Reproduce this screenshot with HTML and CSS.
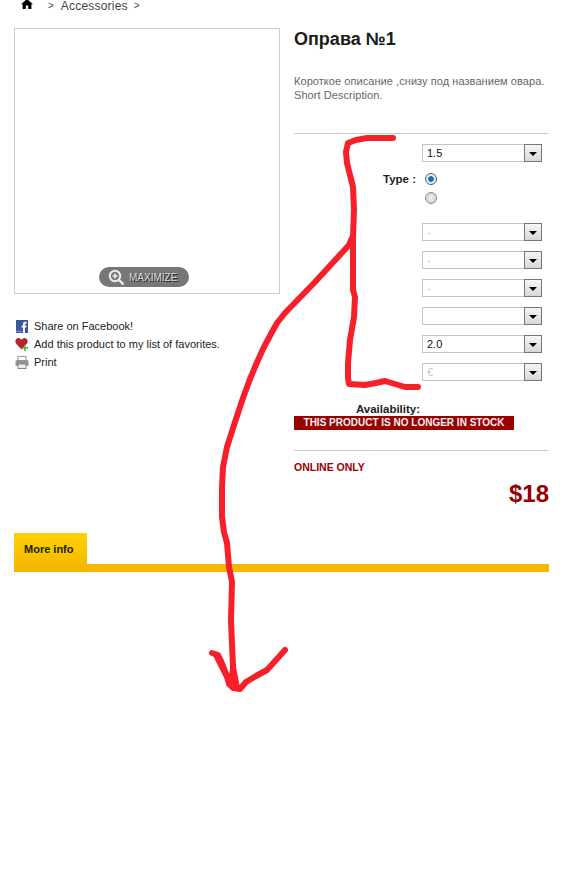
FILE: index.html
```html
<!DOCTYPE html>
<html lang="ru">
<head>
<meta charset="utf-8">
<title>Оправа №1</title>
<link rel="stylesheet" href="styles.css">
</head>
<body>
<nav class="crumbs">
  <svg class="home" width="12" height="10" viewBox="0 0 12 10"><path d="M6 0 L12 5.2 L10.4 5.2 L10.4 10 L7.2 10 L7.2 6.6 L4.8 6.6 L4.8 10 L1.6 10 L1.6 5.2 L0 5.2 Z" fill="#000"/></svg>
  <span class="sep">&gt;</span><span class="crumb">Accessories</span><span class="sep">&gt;</span>
</nav>
<main class="product">
  <section class="left">
    <div class="photo">
      <div class="maximize">
        <svg width="17" height="17" viewBox="0 0 17 17"><circle cx="7" cy="7" r="5.2" fill="#777" stroke="#eee" stroke-width="2"/><path d="M4.5 7h5M7 4.5v5" stroke="#eee" stroke-width="1.6"/><path d="M11 11l4.5 4.5" stroke="#eee" stroke-width="2.4"/></svg>
        <span>MAXIMIZE</span>
      </div>
    </div>
    <ul class="actions">
      <li>
        <svg width="12" height="13" viewBox="0 0 12 13"><rect width="12" height="13" fill="#3b5998"/><path d="M7 13V7.4H5.6V5.4H7V4c0-1.5.9-2.3 2.2-2.3h1.3v2H9.6c-.5 0-.7.2-.7.7v1h1.6l-.3 2H8.9V13z" fill="#fff"/><rect y="10.8" width="6" height="1" fill="#8b9dc3"/></svg>
        <span>Share on Facebook!</span>
      </li>
      <li>
        <svg width="14" height="14" viewBox="0 0 14 14"><path d="M6.5 12.5 L1 6.5 C-.5 4 1 1 3.5 1 C5 1 6 2 6.5 3 C7 2 8 1 9.5 1 C12 1 13.5 4 12 6.5 Z" fill="#b3262a"/><path d="M9 8h1.7v2H13v1.8h-2.3V14H9v-2.200H7V10h2z" fill="#5db548"/></svg>
        <span>Add this product to my list of favorites.</span>
      </li>
      <li>
        <svg width="14" height="13" viewBox="0 0 14 13"><rect x="3" y="0.500" width="8" height="4" fill="#fff" stroke="#999"/><rect x="0.500" y="4" width="13" height="6" rx="1.500" fill="#8f9498"/><rect x="3" y="8" width="8" height="4.500" fill="#eee" stroke="#888"/></svg>
        <span>Print</span>
      </li>
    </ul>
  </section>
  <section class="right">
    <h1 class="title">Оправа №1</h1>
    <p class="desc">Короткое описание ,снизу под названием овара.<br>Short Description.</p>
    <hr class="rule">
    <div class="options">
      <div class="select"><span class="val">1.5</span><span class="btn"><i></i></span></div>
      <div class="type">
        <span class="type-label">Type :</span>
        <div class="radios">
          <span class="radio on"></span>
          <span class="radio"></span>
        </div>
      </div>
      <div class="selects">
        <div class="select"><span class="val dim">-</span><span class="btn"><i></i></span></div>
        <div class="select"><span class="val dim">-</span><span class="btn"><i></i></span></div>
        <div class="select"><span class="val dim">-</span><span class="btn"><i></i></span></div>
        <div class="select"><span class="val dim"></span><span class="btn"><i></i></span></div>
        <div class="select"><span class="val">2.0</span><span class="btn"><i></i></span></div>
        <div class="select"><span class="val dim">€</span><span class="btn"><i></i></span></div>
      </div>
    </div>
    <div class="avail-label">Availability:</div>
    <div class="avail-bar">THIS PRODUCT IS NO LONGER IN STOCK</div>
    <hr class="rule second">
    <div class="online">ONLINE ONLY</div>
    <div class="price">$18</div>
  </section>
</main>
<div class="tabs">
  <div class="tab">More info</div>
</div>
<svg class="scribble" width="565" height="878" viewBox="0 0 565 878" fill="none" stroke="#f7202a" stroke-width="6" stroke-linecap="round" stroke-linejoin="round">
  <path d="M393 138 L367 138 L356 140 L348 143 L346 152 L347 163 L350 175 L353 187 L354 210 L353 237 L353 290 L355 297 L354 317 L350 340 L348 363 L348 378 L349 384 L365 385 L376 383 L385 381 L395 384 L405 387 L418 387"/>
  <path d="M352 238 L349 245 L338 257 L315 282 L285 313 L277 323 L272 332 L264 347 L258 360 L250 379 L243 398 L235 422 L227 447 L223 467 L222 488 L222 517 L224 532 L227 543 L229 567 L232 582 L231 620 L233 667 L237 688"/>
  <path d="M212 653 L218 655 L221 661 L227 676 L229 684 L233 688 L240 689 L246 682 L256 676 L267 670 L276 660 L285 650"/>
  <path d="M216 655 L224 671 L231 684 L233 668"/>
</svg>
</body>
</html>
```

FILE: styles.css
```css
html, body {
  margin: 0;
  padding: 0;
  background: #fff;
}

body {
  position: relative;
  height: 878px;
  overflow: hidden;
  font-family: "Liberation Sans", Arial, sans-serif;
  font-size: 11px;
  color: #222;
}

.crumbs {
  display: flex;
  align-items: center;
  height: 11px;
  padding-left: 21px;
  font-size: 12px;
  color: #444;
}

.home {
  margin-top: -3px;
  margin-right: 15px;
}

.sep {
  font-size: 10px;
}

.crumb {
  margin: 0 6px 0 7px;
  letter-spacing: 0.2px;
}

.product {
  display: flex;
  gap: 14px;
  padding: 17px 16px 0 14px;
}

.left {
  width: 266px;
  flex: none;
}

.photo {
  box-sizing: border-box;
  height: 266px;
  border: 1px solid #ccc;
  display: flex;
  align-items: flex-end;
  justify-content: center;
  padding: 0 6px 6px 0;
}

.maximize {
  display: flex;
  align-items: center;
  gap: 4px;
  box-sizing: border-box;
  width: 90px;
  height: 20px;
  padding-left: 9px;
  border-radius: 10px;
  background: #777;
  color: #ddd;
  font-size: 10px;
  text-shadow: 1px 1px 0 #222;
}

.actions {
  list-style: none;
  margin: 23px 0 0;
  padding: 0;
}

.actions li {
  display: flex;
  align-items: center;
  gap: 5px;
  height: 18px;
  padding-left: 1px;
  font-size: 11px;
}

.actions svg {
  flex: none;
  width: 14px;
}

.right {
  flex: 1;
  min-width: 0;
}

.title {
  margin: 0;
  font-size: 18px;
  line-height: 22px;
  font-weight: bold;
  color: #1c1c1c;
}

.desc {
  margin: 24px 0 0;
  font-size: 11px;
  line-height: 14px;
  letter-spacing: 0.06px;
  color: #666;
}

.rule {
  height: 1px;
  margin: 0;
  border: 0;
  background: #ccc;
}

.desc + .rule {
  margin-top: 31px;
}

.options {
  padding: 10px 0 0 128px;
}

.select {
  box-sizing: border-box;
  display: flex;
  justify-content: space-between;
  width: 120px;
  height: 18px;
  border: 1px solid #c4c4c4;
}

.val {
  padding-left: 4px;
  font-size: 11px;
  line-height: 16px;
  color: #111;
}

.val.dim {
  color: #c8c8c8;
}

.btn {
  box-sizing: border-box;
  display: flex;
  align-items: center;
  justify-content: center;
  width: 18px;
  height: 18px;
  margin: -1px -1px 0 0;
  border: 1px solid #777;
  background: linear-gradient(#f6f6f6, #d8d8d8);
}

.btn i {
  width: 0;
  height: 0;
  margin-top: 2px;
  border-style: solid;
  border-width: 4px 4px 0;
  border-color: #000 transparent transparent;
}

.type {
  position: relative;
  padding-top: 11px;
}

.type-label {
  position: absolute;
  right: calc(100% + 6px);
  top: 9px;
  white-space: nowrap;
  font-size: 11.500px;
  line-height: 16px;
  font-weight: bold;
}

.radios {
  display: flex;
  flex-direction: column;
  gap: 7px;
  padding-left: 3px;
}

.radio {
  box-sizing: border-box;
  width: 12px;
  height: 12px;
  border: 1px solid #8a8a8a;
  border-radius: 50%;
  background: radial-gradient(circle, #eee 0, #ccc 100%);
}

.radio.on {
  border-color: #44617b;
  background: radial-gradient(circle, #1d6fa5 0, #1d6fa5 35%, #e6eef4 45%);
}

.selects {
  display: flex;
  flex-direction: column;
  gap: 10px;
  padding-top: 19px;
}

.avail-label {
  margin-top: 21px;
  width: 188px;
  text-align: center;
  font-size: 11.500px;
  line-height: 14px;
  font-weight: bold;
}

.avail-bar {
  width: 220px;
  height: 14px;
  background: #990000;
  color: #f4f4f4;
  text-align: center;
  font-size: 10px;
  line-height: 14px;
  font-weight: bold;
}

.rule.second {
  margin-top: 20px;
}

.online {
  margin-top: 10px;
  font-size: 10.500px;
  line-height: 13px;
  font-weight: bold;
  color: #990000;
}

.price {
  margin-top: 6px;
  text-align: right;
  font-size: 24px;
  line-height: 28px;
  font-weight: bold;
  color: #990000;
}

.tabs {
  margin: 25px 16px 0 14px;
  height: 39px;
  display: flex;
  align-items: flex-start;
  background: linear-gradient(#f6b800, #f6b800) left bottom / 100% 8px no-repeat;
}

.tab {
  box-sizing: border-box;
  width: 73px;
  height: 39px;
  padding: 9px 0 0 10px;
  background: linear-gradient(#fed300, #f4b400);
  color: #1c1c00;
  font-size: 11px;
  line-height: 15px;
  font-weight: bold;
}

.scribble {
  position: absolute;
  left: 0;
  top: 0;
  pointer-events: none;
}
```
